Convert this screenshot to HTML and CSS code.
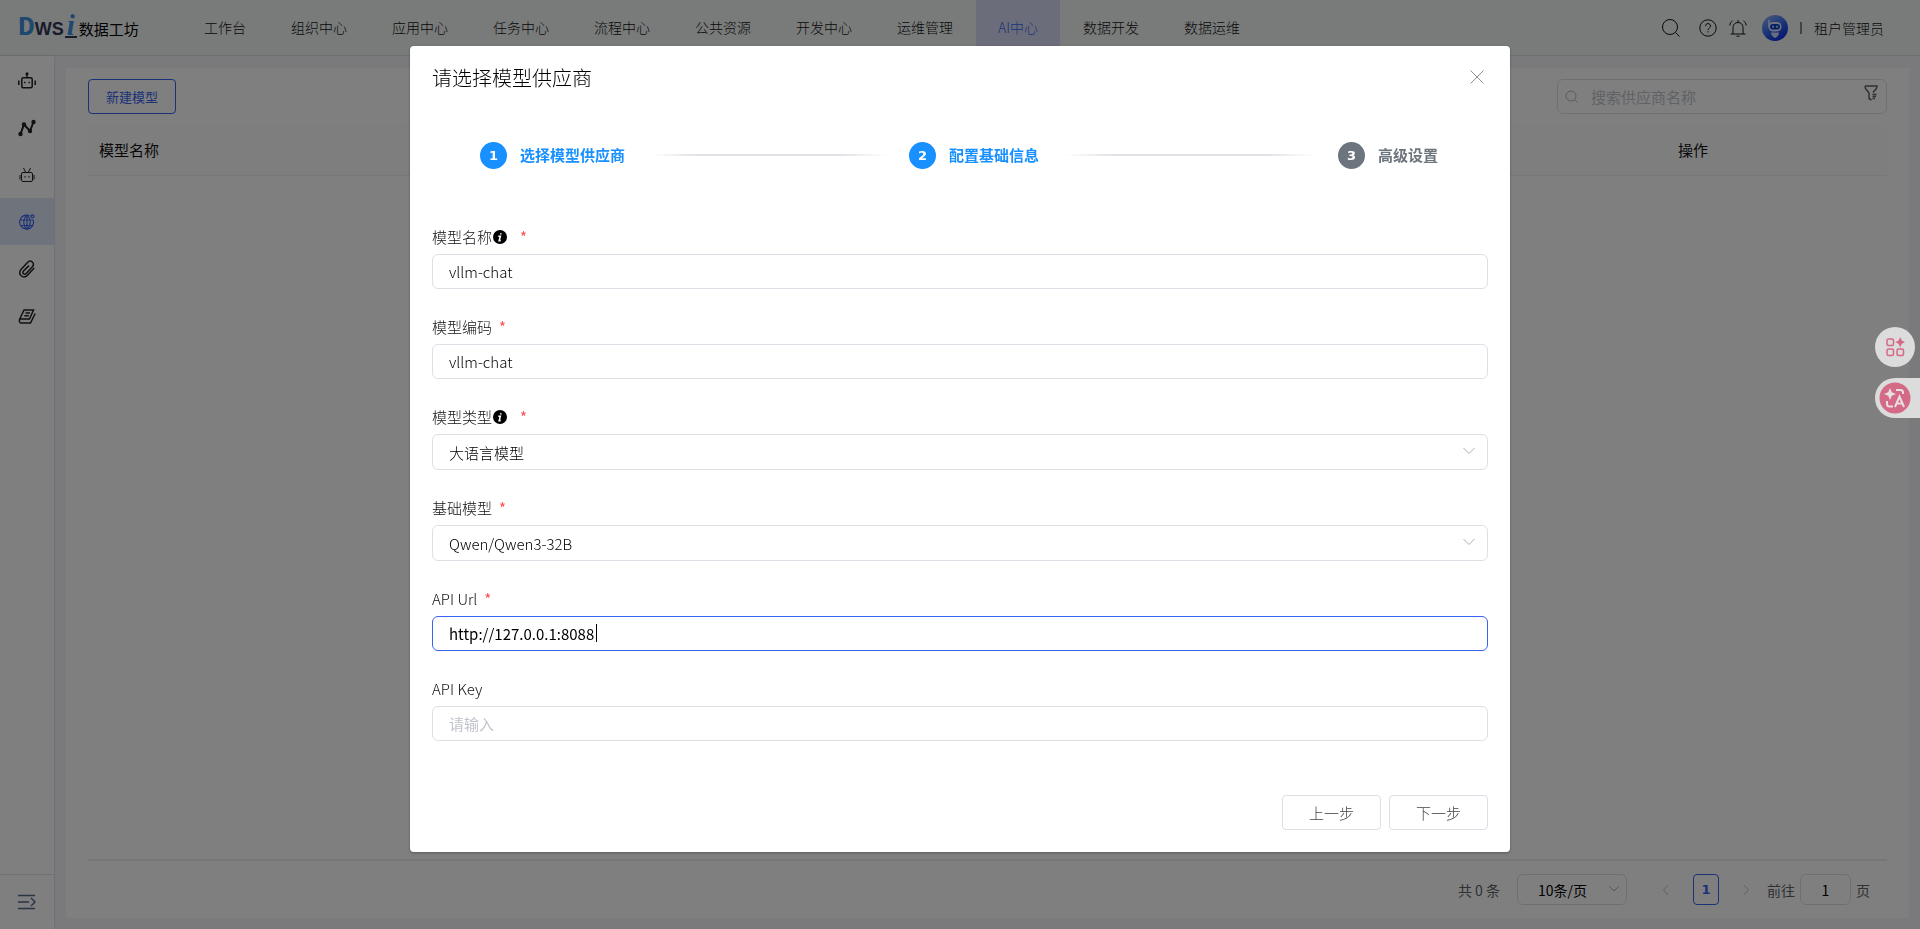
FILE: index.html
```html
<!DOCTYPE html>
<html lang="zh-CN">
  <head>
    <meta charset="UTF-8" />
    <meta name="viewport" content="width=device-width, initial-scale=1.0" />
    <title>数据工坊 - AI中心</title>
    <link rel="stylesheet" href="styles.css">
  </head>
  <body>
    <header class="header">
      <a class="logo" href="#">
        <span class="logo-d">D</span><span class="logo-ws">WS</span><span class="logo-i">i</span>
        <span class="logo-name">数据工坊</span>
      </a>
      <nav class="nav">
        <a href="#">工作台</a>
        <a href="#">组织中心</a>
        <a href="#">应用中心</a>
        <a href="#">任务中心</a>
        <a href="#">流程中心</a>
        <a href="#">公共资源</a>
        <a href="#">开发中心</a>
        <a href="#">运维管理</a>
        <a class="active" href="#">AI中心</a>
        <a href="#">数据开发</a>
        <a href="#">数据运维</a>
      </nav>
      <div class="header-right">
        <button class="icon-btn search-btn" aria-label="搜索">
          <svg width="20" height="20" viewBox="0 0 20 20"><circle cx="9" cy="9" r="7.5" /><path d="M14.5 14.5l4 4" /></svg>
        </button>
        <button class="icon-btn" aria-label="帮助">
          <svg width="18" height="18" viewBox="0 0 18 18"><circle cx="9" cy="9" r="8.2" /><path d="M6.5 7.2C6.5 5.600 7.600 4.600 9 4.600s2.500 1 2.500 2.400c0 1.900-2.500 2-2.500 4" /><path d="M9 12.200v1.300" /></svg>
        </button>
        <button class="icon-btn" aria-label="通知">
          <svg width="18" height="18" viewBox="0 0 18 18"><path d="M1.500 15h15M4 15V8.500c0-3 2-5 5-5s5 2 5 5V15M9 3.500V1M7.500 17.200h3M3.500 1.800C1.900 2.800 1 4.300.8 6.500M14.500 1.800c1.600 1 2.500 2.500 2.700 4.700" /></svg>
        </button>
        <svg class="avatar" width="26" height="26" viewBox="0 0 26 26">
          <defs>
            <linearGradient id="avatarBg" x1="0" y1="0" x2="0.6" y2="1">
              <stop offset="0" stop-color="#9dbcf5" />
              <stop offset="0.55" stop-color="#3a6df0" />
              <stop offset="1" stop-color="#0f2fe0" />
            </linearGradient>
          </defs>
          <circle cx="13" cy="13" r="13" fill="url(#avatarBg)" />
          <path d="M7 5v7" stroke="#dfe9ff" stroke-width="1.500" />
          <rect x="6.500" y="7" width="13" height="9.500" rx="4.500" fill="#dfe9ff" />
          <rect x="8" y="9" width="10" height="5.500" rx="2.700" fill="#1238c8" />
          <circle cx="11" cy="11.700" r="1.200" fill="#6fd2ff" />
          <circle cx="15" cy="11.700" r="1.200" fill="#6fd2ff" />
          <path d="M9 17.500h8c0 2.500-1.500 4.500-4 5.500-2.500-1-4-3-4-5.500z" fill="#cfdcff" />
        </svg>
        <span class="divider"></span>
        <span class="user">租户管理员</span>
      </div>
    </header>

    <div class="layout">
      <aside class="sidebar">
        <a class="side-item" href="#" aria-label="智能体">
          <svg width="18" height="18" viewBox="0 0 18 18"><rect x="3.800" y="5.800" width="10.400" height="10" rx="1.500" /><path d="M9 5.500V2M.8 8.500v4.500M17.200 8.500v4.500" /><circle class="fill" cx="9" cy="1.800" r="1.500" /><path d="M6.800 9.800v1.500M11.200 9.800v1.500" /></svg>
        </a>
        <a class="side-item" href="#" aria-label="流程">
          <svg width="18" height="18" viewBox="0 0 18 18"><path class="thick" d="M2.500 15L6 5.500l6 6.500L15.500 3" /><circle class="fill" cx="2.500" cy="15" r="2.200" /><circle class="fill" cx="6" cy="5.500" r="2.200" /><circle class="fill" cx="12" cy="12" r="2.200" /><circle class="fill" cx="15.500" cy="3" r="2.200" /></svg>
        </a>
        <a class="side-item thin" href="#" aria-label="机器人">
          <svg width="18" height="18" viewBox="0 0 18 18"><rect x="3.500" y="6.500" width="11" height="9" rx="1.500" /><path d="M7.500 6L5.500 2M10.500 6l2-4M2 9v4.500M16 9v4.500" /><path d="M7 10v1.500M11 10v1.500" /></svg>
        </a>
        <a class="side-item active" href="#" aria-label="模型">
          <svg width="18" height="18" viewBox="0 0 18 18"><path d="M11.500 2.700A7 7 0 1 0 15.300 7M2.500 7h13M2.800 12.500h12.500" /><path d="M8.500 2.300C4.800 6 4.800 12.500 8.500 16.200M9.500 2.300c3.700 3.700 3.700 10.200 0 13.900" /><circle cx="14.500" cy="3.300" r="1.500" /><path d="M9 2.500V16" /></svg>
        </a>
        <a class="side-item" href="#" aria-label="附件">
          <svg width="18" height="18" viewBox="0 0 18 18"><path d="M16.200 8l-6.500 7c-2 2.200-4.600 2.400-6.500.8C1.200 14 1.200 11.500 3 9.500l6.500-7c1.500-1.600 3.400-1.700 4.800-.5 1.500 1.300 1.500 3.300.1 4.800l-6.200 6.600c-.9 1-2 1-2.800.3-.8-.7-.8-1.800.1-2.700L11 5.600" /></svg>
        </a>
        <a class="side-item" href="#" aria-label="知识库">
          <svg width="18" height="18" viewBox="0 0 18 18"><path d="M6 3h9.500L11.500 12H1.800zM1.800 12c-1 1.700-.2 4 1.200 4h9.500L17.200 6.500M7.500 5.900h4.500M6.300 8.800h4.500" /></svg>
        </a>
        <button class="collapse" aria-label="展开菜单">
          <svg width="18" height="16" viewBox="0 0 18 16"><path d="M0 1.500h17M0 8h11M0 14.500h17M13 4l4 4-4 4" /></svg>
        </button>
      </aside>

      <main class="panel">
        <div class="toolbar">
          <button class="create-btn">新建模型</button>
          <label class="search">
            <svg width="14" height="14" viewBox="0 0 14 14"><circle cx="6" cy="6" r="5" /><path d="M9.800 9.800l2.700 2.700" /></svg>
            <input type="text" placeholder="搜索供应商名称" aria-label="搜索供应商名称" />
            <svg class="filter" width="14" height="16" viewBox="0 0 14 16"><path d="M1 1h12l-.5 2.500L9 7.500M1 1l.5 2.500L5 8v5.500l2.500 1.500M8.500 9.500h4M8.500 11.500h3.500M8.500 13.500h2.500" /></svg>
          </label>
        </div>
        <table class="table">
          <thead>
            <tr>
              <th>模型名称</th>
              <th class="col-action">操作</th>
            </tr>
          </thead>
        </table>
        <div class="pagination">
          <span class="total">共 0 条</span>
          <div class="select page-size">
            <select aria-label="每页条数"><option>10条/页</option></select>
            <svg width="12" height="12" viewBox="0 0 12 12"><path d="M1.500 3.500L6 8l4.500-4.500" /></svg>
          </div>
          <button class="arrow" aria-label="上一页" disabled>
            <svg width="12" height="12" viewBox="0 0 12 12"><path d="M8 1L3.500 6 8 11" /></svg>
          </button>
          <button class="page-num">1</button>
          <button class="arrow" aria-label="下一页" disabled>
            <svg width="12" height="12" viewBox="0 0 12 12"><path d="M4 1l4.500 5L4 11" /></svg>
          </button>
          <label class="jumper">前往 <input type="text" value="1" /> 页</label>
        </div>
      </main>
    </div>

    <div class="mask">
      <section class="dialog" role="dialog" aria-labelledby="dialogTitle">
        <div class="dialog-header">
          <h2 id="dialogTitle">请选择模型供应商</h2>
          <button class="close" aria-label="关闭">
            <svg width="14" height="14" viewBox="0 0 14 14"><path d="M.5.5l13 13M13.500.5l-13 13" /></svg>
          </button>
        </div>

        <ol class="steps">
          <li class="step done"><span class="step-num">1</span><span>选择模型供应商</span><i class="step-line"></i></li>
          <li class="step done"><span class="step-num">2</span><span>配置基础信息</span><i class="step-line"></i></li>
          <li class="step"><span class="step-num">3</span><span>高级设置</span></li>
        </ol>

        <form class="form">
          <div class="field">
            <div class="field-label">
              <label for="name">模型名称</label>
              <svg class="info" width="14" height="14" viewBox="0 0 14 14"><circle cx="7" cy="7" r="7" /><path d="M5.300 6.200h2L6.200 10.600h1.500" /><path d="M7.800 3.200v1.300" /></svg>
              <span class="required">*</span>
            </div>
            <input id="name" type="text" value="vllm-chat" />
          </div>
          <div class="field">
            <div class="field-label"><label for="code">模型编码</label><span class="required">*</span></div>
            <input id="code" type="text" value="vllm-chat" />
          </div>
          <div class="field">
            <div class="field-label">
              <label for="type">模型类型</label>
              <svg class="info" width="14" height="14" viewBox="0 0 14 14"><circle cx="7" cy="7" r="7" /><path d="M5.300 6.200h2L6.200 10.600h1.500" /><path d="M7.800 3.200v1.300" /></svg>
              <span class="required">*</span>
            </div>
            <div class="select">
              <select id="type"><option>大语言模型</option></select>
              <svg width="14" height="14" viewBox="0 0 14 14"><path d="M1.500 4L7 9.500 12.500 4" /></svg>
            </div>
          </div>
          <div class="field">
            <div class="field-label"><label for="base">基础模型</label><span class="required">*</span></div>
            <div class="select">
              <select id="base"><option>Qwen/Qwen3-32B</option></select>
              <svg width="14" height="14" viewBox="0 0 14 14"><path d="M1.500 4L7 9.500 12.500 4" /></svg>
            </div>
          </div>
          <div class="field">
            <div class="field-label"><label for="url">API Url</label><span class="required">*</span></div>
            <div class="url-box">
              <input id="url" type="text" value="http://127.0.0.1:8088" />
              <i class="caret"></i>
            </div>
          </div>
          <div class="field">
            <div class="field-label"><label for="key">API Key</label></div>
            <input id="key" type="text" placeholder="请输入" />
          </div>
          <div class="dialog-footer">
            <button type="button">上一步</button>
            <button type="button">下一步</button>
          </div>
        </form>
      </section>
    </div>

    <div class="float-tools">
      <button class="float-apps" aria-label="应用">
        <svg width="20" height="20" viewBox="0 0 20 20"><rect x="2" y="2" width="6.500" height="6.500" rx="1.500" /><rect x="2" y="12" width="6.500" height="6.500" rx="1.500" /><rect x="12" y="12" width="6.500" height="6.500" rx="1.500" /><path class="star" d="M15.200 0l1.600 3.600 3.200 1.600-3.200 1.600-1.600 3.600-1.600-3.600-3.200-1.600 3.200-1.600z" /></svg>
      </button>
      <button class="float-translate" aria-label="翻译">
        <svg width="32" height="32" viewBox="0 0 32 32"><circle cx="16" cy="16" r="15.500" /><path class="star" d="M11 6l1.800 4.200L17 12l-4.200 1.800L11 18l-1.800-4.200L5 12l4.200-1.800z" /><path d="M17 8h4.500c1.500 0 2.500 1 2.500 2.500V12M8 19v3c0 1.500 1 2.500 2.500 2.500H14M16 25l4.500-10.500L25 25M17.500 21.500h6" /></svg>
      </button>
    </div>

    <script>
      const url = document.querySelector("#url");
      url.focus();
      url.setSelectionRange(url.value.length, url.value.length);
    </script>
  </body>
</html>
```
FILE: styles.css
```css
* {
  margin: 0;
  padding: 0;
  box-sizing: border-box;
}

body {
  height: 100vh;
  display: flex;
  flex-direction: column;
  font-family: "Noto Sans CJK SC", sans-serif;
  font-size: 15px;
  font-weight: 300;
  color: #111;
  background: #f4f4fa;
  overflow: hidden;
}

button,
input,
select {
  font: inherit;
  color: inherit;
  background: none;
  border: none;
  outline: none;
}

a {
  color: inherit;
  text-decoration: none;
}

svg {
  display: block;
  flex: none;
  fill: none;
  stroke: currentColor;
}

/* header */
.header {
  height: 56px;
  flex: none;
  display: flex;
  align-items: center;
  background: #f3f7f5;
  border-bottom: 1px solid #dcdfe3;
}

.logo {
  width: 182px;
  padding-left: 18px;
  display: flex;
  align-items: baseline;
  font-weight: bold;
}

.logo-d {
  font-family: "Liberation Mono", monospace;
  font-size: 28px;
  line-height: 30px;
  color: #3f8ee0;
}

.logo-ws {
  font-family: "Liberation Sans", sans-serif;
  font-size: 18px;
  line-height: 20px;
  color: #33375c;
}

.logo-i {
  width: 12px;
  margin: 0 2px 0 1px;
  text-align: center;
  font-family: "Liberation Serif", serif;
  font-style: italic;
  font-size: 29px;
  line-height: 22px;
  color: #3f8ee0;
  border-bottom: 2px solid #33375c;
}

.logo-name {
  font-size: 15px;
  font-weight: normal;
  line-height: 22px;
  color: #000;
}

.nav {
  height: 100%;
  display: flex;
  gap: 1px;
}

.nav a {
  padding: 0 22px;
  font-size: 14px;
  line-height: 55px;
}

.nav a.active {
  color: #3964f0;
  background: #d6dcf5;
}

.header-right {
  margin-left: auto;
  padding-right: 36px;
  display: flex;
  align-items: center;
  gap: 12px;
  font-size: 14px;
}

.search-btn {
  margin-right: 6px;
}

.avatar {
  margin-left: 3px;
  stroke: none;
}

.divider {
  width: 2px;
  height: 12px;
  background: #888;
}

/* layout */
.layout {
  flex: 1;
  min-height: 0;
  display: flex;
}

.sidebar {
  width: 54px;
  flex: none;
  padding-top: 1px;
  display: flex;
  flex-direction: column;
  background: #fff;
  box-shadow: 0 0 2px #c8c8d0;
}

.side-item {
  height: 47px;
  display: flex;
  align-items: center;
  justify-content: center;
  color: #222;
}

.side-item svg {
  stroke-width: 1.5;
}

.side-item.thin svg {
  stroke-width: 1;
}

.side-item .fill {
  fill: currentColor;
  stroke: none;
}

.side-item .thick {
  stroke-width: 2;
}

.side-item.active {
  color: #3964f0;
  background: #dfe6f8;
}

.side-item.active svg {
  stroke-width: 1.2;
}

.collapse {
  height: 55px;
  margin-top: auto;
  display: flex;
  align-items: center;
  justify-content: center;
  color: #56668a;
  border-top: 1px solid #e4e4e8;
}

.collapse svg {
  stroke-width: 1.5;
}

.panel {
  flex: 1;
  margin: 12px 11px 11px 12px;
  padding: 11px 22px 0;
  display: flex;
  flex-direction: column;
  background: #fff;
}

.toolbar {
  display: flex;
  justify-content: space-between;
  margin-bottom: 11px;
}

.create-btn {
  width: 88px;
  height: 35px;
  padding-bottom: 1px;
  font-size: 13px;
  font-weight: normal;
  color: #3964f0;
  border: 1px solid #3964f0;
  border-radius: 4px;
}

.search {
  width: 330px;
  height: 35px;
  padding: 0 8px 0 7px;
  display: flex;
  align-items: center;
  gap: 12px;
  color: #b4b7bf;
  border: 1px solid #dcdfe6;
  border-radius: 6px;
}

.search input {
  flex: 1;
  min-width: 0;
  font-weight: normal;
}

.search .filter {
  color: #606266;
  margin-bottom: 8px;
  stroke-width: 1.5;
}

::placeholder {
  color: #c0c4cc;
  opacity: 1;
}

.table {
  width: 100%;
  border-collapse: collapse;
}

.table th {
  height: 50px;
  padding: 0 11px;
  font-weight: normal;
  text-align: left;
  background: #fcfcfc;
  border-bottom: 1px solid #ebeef5;
}

.table .col-action {
  width: 388px;
  text-align: center;
}

.pagination {
  height: 59px;
  margin-top: auto;
  padding-right: 17px;
  display: flex;
  align-items: center;
  justify-content: flex-end;
  font-size: 14px;
  font-weight: normal;
  color: #606266;
  border-top: 2px solid #ececf6;
}

.total {
  margin-right: 17px;
}

/* select with its own chevron */
.select {
  display: grid;
  align-items: center;
}

.select select,
.select svg {
  grid-area: 1 / 1;
}

.select select {
  appearance: none;
}

.select svg {
  justify-self: end;
  margin-right: 12px;
  margin-bottom: 2px;
  color: #a8abb2;
  pointer-events: none;
}

.page-size select {
  width: 110px;
  height: 31px;
  padding-left: 20px;
  color: #000;
  border: 1px solid #dcdfe6;
  border-radius: 6px;
}

.page-size svg {
  margin-right: 7px;
}

.arrow {
  width: 26px;
  height: 31px;
  display: flex;
  align-items: center;
  justify-content: center;
  color: #c0c4cc;
}

.page-size + .arrow {
  margin-left: 26px;
}

.page-num {
  width: 26px;
  height: 31px;
  margin: 0 14px;
  font-family: "DejaVu Sans", sans-serif;
  font-size: 13px;
  font-weight: bold;
  color: #3964f0;
  border: 1px solid #3964f0;
  border-radius: 4px;
}

.jumper {
  margin-left: 8px;
  display: flex;
  align-items: center;
  gap: 5px;
}

.jumper input {
  width: 51px;
  height: 31px;
  text-align: center;
  color: #000;
  border: 1px solid #dcdfe6;
  border-radius: 6px;
}

/* dialog */
.mask {
  position: fixed;
  inset: 0;
  padding-top: 5vh;
  display: flex;
  justify-content: center;
  align-items: flex-start;
  background: rgba(0, 0, 0, 0.5);
}

.dialog {
  width: 1100px;
  max-width: 100%;
  padding: 18px 22px 22px;
  background: #fff;
  border-radius: 4px;
  box-shadow: 0 1px 3px rgba(0, 0, 0, 0.3);
}

.dialog-header {
  height: 28px;
  display: flex;
  align-items: center;
  justify-content: space-between;
}

.dialog-header h2 {
  font-size: 20px;
  font-weight: inherit;
  line-height: 28px;
  color: #000;
}

.close {
  padding: 4px 4px 6px;
  color: #909399;
}

.steps {
  margin: 49px 50px 52px 48px;
  display: flex;
  list-style: none;
}

.step {
  display: flex;
  align-items: center;
  font-weight: bold;
  line-height: 28px;
  color: #6c757d;
}

.step.done {
  flex: 1;
  color: #1890ff;
}

.step-num {
  width: 27px;
  height: 27px;
  margin-right: 13px;
  font-family: "DejaVu Sans", sans-serif;
  font-size: 13px;
  line-height: 27px;
  text-align: center;
  color: #fff;
  background: #6c757d;
  border-radius: 50%;
}

.done .step-num {
  background: #1890ff;
}

.step-line {
  flex: 1;
  height: 2px;
  margin: 0 22px 0 26px;
  background: linear-gradient(to right, transparent, #dee2e6 20%, #dee2e6 80%, transparent);
}

.form {
  display: flex;
  flex-direction: column;
  gap: 22px;
}

.field-label {
  height: 33px;
  padding-bottom: 2px;
  display: flex;
  align-items: center;
}

.info {
  margin-left: 1px;
  fill: #000;
  stroke: none;
}

.info path {
  stroke: #fff;
  stroke-width: 1.6;
}

.required {
  margin-left: 7px;
  font-weight: normal;
  color: #ff4d4f;
}

.info + .required {
  margin-left: 13px;
}

.field input,
.field select {
  width: 100%;
  height: 35px;
  padding: 0 16px;
  color: #000;
  border: 1px solid #dcdfe6;
  border-radius: 6px;
}

.field select {
  height: 36px;
}

.field input:focus {
  border-color: #3964f0;
  caret-color: transparent;
}

.field ::placeholder {
  font-weight: normal;
}

.url-box {
  position: relative;
  display: flex;
}

.url-box input {
  font-weight: normal;
}

.caret {
  display: none;
  position: absolute;
  top: 8px;
  left: 164px;
  width: 1px;
  height: 18px;
  background: #000;
}

.url-box input:focus + .caret {
  display: block;
}

.dialog-footer {
  margin-top: 32px;
  display: flex;
  justify-content: flex-end;
  gap: 8px;
}

.dialog-footer button {
  width: 99px;
  height: 35px;
  color: #444;
  border: 1px solid #dcdfe6;
  border-radius: 4px;
}

/* floating tools on the right edge */
.float-tools {
  position: fixed;
  top: 327px;
  right: 0;
  display: flex;
  flex-direction: column;
  align-items: flex-end;
  gap: 11px;
}

.float-tools button {
  height: 40px;
  display: flex;
  align-items: center;
  background: #dcdcdc;
  color: #d46a85;
}

.float-tools .star {
  fill: currentColor;
  stroke: none;
}

.float-apps {
  width: 40px;
  margin-right: 5px;
  justify-content: center;
  border-radius: 50%;
}

.float-apps svg {
  stroke-width: 1.5;
}

.float-translate {
  width: 45px;
  padding-left: 4px;
  border-radius: 20px 0 0 20px;
}

.float-translate circle {
  fill: #d46a85;
  stroke: none;
}

.float-tools .float-translate svg {
  color: #e8dfe2;
  stroke-width: 2;
}
```
